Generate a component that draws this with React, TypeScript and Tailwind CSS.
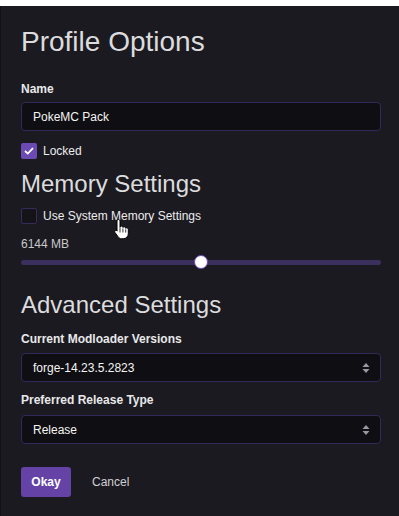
import React from "react";

function Label({ children }: { children: React.ReactNode }) {
  return <div className="text-[12px] font-bold leading-[14px] text-[#e8e8ea]">{children}</div>;
}

function SelectBox({ value }: { value: string }) {
  return (
    <div className="flex h-[29px] items-center justify-between rounded-[4px] border border-[#33285a] bg-[#0f0e12] pl-[11px] pr-[10px] text-[12px] text-[#f4f4f4]">
      <span>{value}</span>
      <svg width="8" height="12" viewBox="0 0 8 12" className="text-[#9a98a2]">
        <path d="M4 1 L7.5 5 H0.5 Z" fill="currentColor" />
        <path d="M4 11 L7.5 7 H0.5 Z" fill="currentColor" />
      </svg>
    </div>
  );
}

function HandCursor() {
  return (
    <svg width="16" height="22" viewBox="0 0 16 22" className="absolute left-[114px] top-[212px]">
      <path
        d="M4.5 1.5c.8 0 1.5.7 1.5 1.5v6c.3-.6 1-1 1.6-.9.8.1 1.3.7 1.3 1.4.3-.5.9-.8 1.5-.7.8.1 1.3.8 1.3 1.5.3-.4.8-.6 1.3-.5.8.1 1.3.8 1.3 1.6v4.3c0 2.8-2.2 5-5 5H7.6c-1.4 0-2.6-.7-3.4-1.8L1 14.6c-.5-.7-.3-1.6.4-2 .6-.4 1.4-.2 1.8.3L3 13V3c0-.8.7-1.5 1.5-1.5z"
        fill="#fff"
        stroke="#000"
        strokeWidth="1"
      />
      <path d="M8.9 10.5v4M11.7 11.4v3.2M6 9v5.5" stroke="#000" strokeWidth="0.8" />
    </svg>
  );
}

export default function App() {
  return (
    <div
      className="relative min-h-[516px] w-[399px] bg-[#151419]"
      style={{ fontFamily: '"Liberation Sans", Arial, sans-serif' }}
    >
      <div className="mt-[6px] flex min-h-[510px] flex-col border-l border-[#121116] bg-[#1b1a20] pl-[20px] pr-[18px] text-[#e6e6e8]">
        <h1 className="mt-[20px] text-[28px] leading-[32px] text-[#dcdcde]">Profile Options</h1>

        <div className="mt-[24px]">
          <Label>Name</Label>
        </div>
        <div className="mt-[6px] flex h-[29px] items-center rounded-[4px] border border-[#33285a] bg-[#0f0e12] pl-[11px] text-[12px] text-[#f4f4f4]">
          PokeMC Pack
        </div>

        <div className="mt-[11px] flex items-center gap-[6px]">
          <div className="flex h-[16px] w-[16px] items-center justify-center rounded-[2px] bg-[#6c4ab3]">
            <svg width="10" height="8" viewBox="0 0 10 8">
              <path d="M1 4 L3.8 6.6 L9 1.2" fill="none" stroke="#fff" strokeWidth="1.8" />
            </svg>
          </div>
          <span className="text-[12px] text-[#ececee]">Locked</span>
        </div>

        <h2 className="mt-[10px] text-[24px] leading-[28px] text-[#dcdcde]">Memory Settings</h2>

        <div className="mt-[9px] flex items-center gap-[6px]">
          <div className="h-[16px] w-[16px] rounded-[2px] border border-[#372c58] bg-[#141318]" />
          <span className="text-[12px] text-[#ececee]">Use System Memory Settings</span>
        </div>

        <div className="mt-[12px] text-[12px] leading-[14px] text-[#c8c8cc]">6144 MB</div>

        <div className="relative mt-[4px] flex h-[14px] items-center">
          <div className="h-[5px] w-full rounded-full bg-[#3b2f5e]" />
          <div className="absolute left-[173px] top-0 h-[14px] w-[14px] rounded-full border border-[#6c4ab3] bg-white" />
        </div>

        <h2 className="mt-[22px] text-[24px] leading-[28px] text-[#dcdcde]">Advanced Settings</h2>

        <div className="mt-[13px]">
          <Label>Current Modloader Versions</Label>
        </div>
        <div className="mt-[7px]">
          <SelectBox value="forge-14.23.5.2823" />
        </div>

        <div className="mt-[11px]">
          <Label>Preferred Release Type</Label>
        </div>
        <div className="mt-[8px]">
          <SelectBox value="Release" />
        </div>

        <div className="mt-[23px] flex items-center gap-[21px]">
          <button className="h-[30px] w-[50px] rounded-[3px] bg-[#6442a6] text-[12px] font-bold text-white">
            Okay
          </button>
          <span className="text-[12px] text-[#d0d0d4]">Cancel</span>
        </div>
      </div>
      <HandCursor />
    </div>
  );
}
